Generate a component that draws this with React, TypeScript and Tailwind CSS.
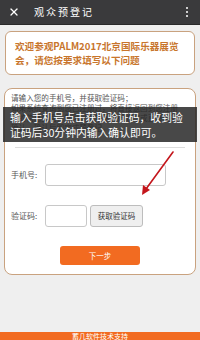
import { X } from 'lucide-react';

const font = { fontFamily: '"Noto Sans CJK SC", "Noto Sans", sans-serif' };

export default function App() {
  return (
    <div className="w-[200px] h-[340px] bg-[#efefef] flex flex-col relative overflow-hidden" style={font}>
      {/* top bar */}
      <div className="h-[25px] bg-[#3a3a3c] flex items-center px-[8px] border-b border-[#2a2a2a]">
        <X size={12} strokeWidth={2.5} className="text-white" />
        <span className="ml-[14px] text-[10px] text-white tracking-[2px] leading-none">观众预登记</span>
        <div className="ml-auto mr-[4px] flex flex-col gap-[2px]">
          <span className="w-[2px] h-[2px] bg-white rounded-full" />
          <span className="w-[2px] h-[2px] bg-white rounded-full" />
          <span className="w-[2px] h-[2px] bg-white rounded-full" />
        </div>
      </div>

      {/* intro card */}
      <div className="mx-[5px] mt-[6px] h-[44px] bg-white border border-[#c9a27f] rounded-[6px] px-[9px] flex flex-col justify-center">
        <p className="text-[9.6px] leading-[14px] font-bold text-[#c8752c] whitespace-nowrap">欢迎参观PALM2017北京国际乐器展览</p>
        <p className="text-[9.6px] leading-[14px] font-bold text-[#c8752c] whitespace-nowrap">会，请您按要求填写以下问题</p>
      </div>

      {/* form card */}
      <div className="mx-[4px] mt-[13px] h-[187px] bg-white border border-[#c9a27f] rounded-[8px] px-[6px] pt-[4px] flex flex-col">
        <div className="text-[7.6px] leading-[10px] text-[#555] h-[54px]">
          <p>请输入您的手机号，并获取验证码；</p>
          <p>如果系统查询到您已注册过，将直接返回到您注册</p>
          <p>时的信息页面，您可以对信息进行修改或直接进行</p>
          <p>确认，确认后即完成预登记。</p>
        </div>
        <div className="h-px bg-[#ddd] mx-[4px]" />

        <div className="flex items-center mt-[16px]">
          <span className="w-[34px] text-[8px] text-[#555]">手机号:</span>
          <div className="w-[121px] h-[22px] border border-[#c8c8c8] rounded-[3px]" />
        </div>
        <div className="flex items-center mt-[19px]">
          <span className="w-[34px] text-[8px] text-[#555]">验证码:</span>
          <div className="w-[42px] h-[22px] border border-[#c8c8c8] rounded-[3px]" />
          <button className="ml-[3px] w-[53px] h-[22px] bg-[#efefef] border border-[#bdbdbd] rounded-[3px] text-[7.5px] text-[#333]">
            获取验证码
          </button>
        </div>
        <div className="flex justify-center mt-[19px]">
          <button className="w-[80px] h-[19px] bg-[#f26b21] rounded-[3px] text-[7.5px] text-white">下一步</button>
        </div>
      </div>

      {/* footer */}
      <div className="mt-auto h-[8px] bg-[#f26b21] flex items-center justify-center">
        <span className="text-[7px] leading-none text-white">蓄几软件技术支持</span>
      </div>

      {/* tooltip overlay */}
      <div className="absolute left-[3px] top-[107px] w-[194px] h-[35px] bg-[rgba(40,40,40,0.85)] px-[7px] flex flex-col justify-center">
        <p className="text-[10.8px] leading-[15px] text-white whitespace-nowrap">输入手机号点击获取验证码，收到验</p>
        <p className="text-[10.8px] leading-[15px] text-white whitespace-nowrap">证码后30分钟内输入确认即可。</p>
      </div>

      {/* red arrow */}
      <svg className="absolute left-0 top-0 pointer-events-none" width="200" height="340" viewBox="0 0 200 340">
        <line x1="173" y1="152" x2="146" y2="189" stroke="#c4161c" strokeWidth="1.6" strokeLinecap="round" />
        <polygon points="142,195 143,185 150,190" fill="#c4161c" />
      </svg>
    </div>
  );
}
